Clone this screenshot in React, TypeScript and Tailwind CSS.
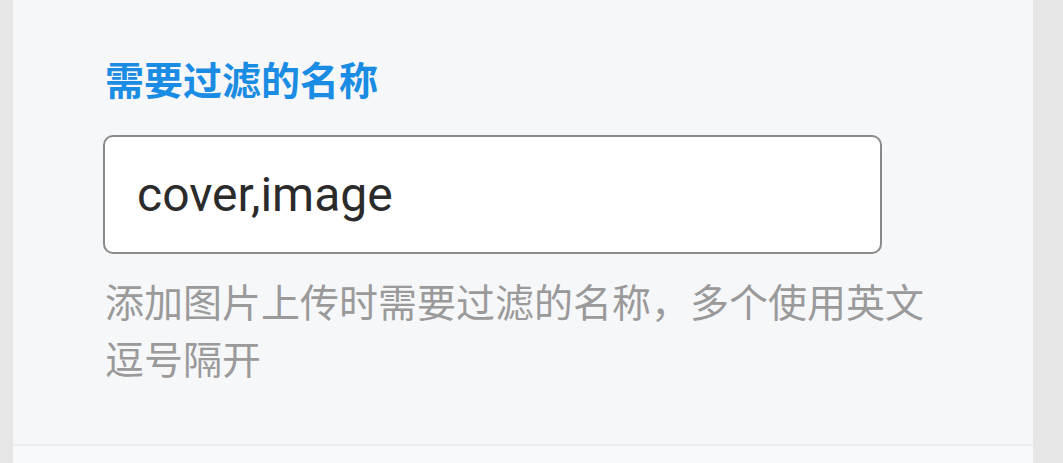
export default function App() {
  return (
    <div className="flex h-[463px] w-[1063px] bg-[#e6e6e6] font-['Noto_Sans_CJK_SC',sans-serif]">
      <div className="ml-[13px] flex w-[1020px] flex-col bg-[#f6f7f9]">
        <div className="h-[444px] px-[92px] pt-[59px]">
          <h2 className="text-[39px] font-bold leading-[39px] text-[#1b8ce3]">需要过滤的名称</h2>
          <div className="-ml-[2px] mt-[37px] flex h-[119px] w-[779px] items-center rounded-[10px] border-2 border-[#8a8a8a] bg-white pl-[32px]">
            <span className="font-['Roboto','Noto_Sans_CJK_SC',sans-serif] text-[48px] leading-none text-[#2b2b2b]">
              cover,image
            </span>
          </div>
          <p className="mt-[18px] text-[39px] leading-[57px] text-[#9a9a9a]">
            添加图片上传时需要过滤的名称，多个使用英文逗号隔开
          </p>
        </div>
        <div className="flex-1 border-t-2 border-[#ededed] bg-[#f8f9fa]" />
      </div>
    </div>
  );
}
